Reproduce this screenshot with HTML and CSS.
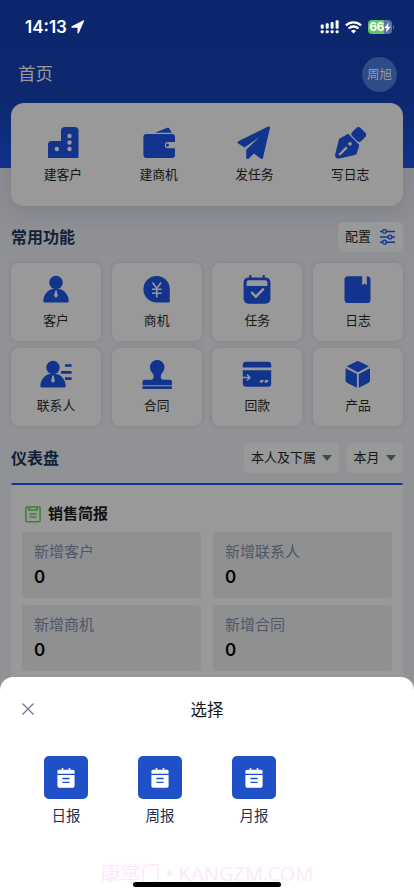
FILE: index.html
```html
<!DOCTYPE html>
<html lang="zh-CN">
<head>
<meta charset="utf-8">
<meta name="viewport" content="width=device-width, initial-scale=1">
<title>首页</title>
<link rel="stylesheet" href="styles.css">
</head>
<body>
<div class="screen">
  <header class="hero">
    <div class="status">
      <div class="clock"><span>14:13</span>
        <svg width="14" height="14" viewBox="0 0 14 14"><path d="M13.3.6 7.800 13c-.3.9-1.300.7-1.300-.3V7.700H1.200C.1 7.700 0 6.600.8 6.200L12.500.3c.7-.3 1.100 0 .8.3Z" fill="#fff"/></svg>
      </div>
      <div class="signals">
        <svg width="20" height="14" viewBox="0 0 20 14" fill="#fff"><rect x=".7" y="4.500" width="3" height="4.300" rx="1"/><rect x="5.700" y="3.300" width="3" height="5.500" rx="1"/><rect x="10.600" y="2" width="3" height="6.800" rx="1"/><rect x="15.600" y=".3" width="3" height="8.500" rx="1"/><rect x=".7" y="10.300" width="3" height="3" rx="1"/><rect x="5.700" y="10.300" width="3" height="3" rx="1"/><rect x="10.600" y="10.300" width="3" height="3" rx="1"/><rect x="15.600" y="10.300" width="3" height="3" rx="1"/></svg>
        <svg class="wifi" width="17" height="13" viewBox="0 0 17 13" fill="none" stroke="#fff" stroke-width="2.300"><path d="M.9 4.400a11 11 0 0 1 15.200 0M3.600 7.500a7 7 0 0 1 9.800 0"/><path d="M8.500 12.500 6 10a3.600 3.600 0 0 1 5 0Z" fill="#fff" stroke="none"/></svg>
        <div class="battery"><span>66</span><svg width="7" height="11" viewBox="0 0 7 11"><path d="M4.700.3.4 6h2.300l-.7 4.600L6.700 4.700H4.100Z" fill="#fff"/></svg></div><i class="nub"></i>
      </div>
    </div>
    <div class="navbar"><h1>首页</h1><div class="avatar">周旭</div></div>
  </header>

  <main class="content">
    <section class="quick">
      <div class="quick-item"><svg width="32" height="32" viewBox="0 0 32 32"><path d="M1 31V17.500a3.500 3.500 0 0 1 3.500-3.500H14V4a4 4 0 0 1 4-4h9.500a4 4 0 0 1 4 4v27Z" fill="currentColor"/><g fill="#999"><circle cx="22.500" cy="9" r="2.200"/><circle cx="22.500" cy="15.500" r="2.200"/><circle cx="22.500" cy="22" r="2.200"/><circle cx="9.800" cy="22" r="2.200"/></g></svg><span>建客户</span></div>
      <div class="quick-item"><svg width="32" height="32" viewBox="0 0 32 32"><g fill="currentColor"><path d="M12 5.800 23.500 1c1.500-.6 2.500-.2 3.200 1.100l2 3.700Z"/><path d="M3.400 6.900H29.500A2.700 2.700 0 0 1 32 9.500v5.400H25a3.200 3.200 0 0 0 0 6.400h7V28a3 3 0 0 1-3 3H3.400A3 3 0 0 1 .4 28V9.900a3 3 0 0 1 3-3Z"/><circle cx="24.400" cy="18.100" r="1.600"/></g></svg><span>建商机</span></div>
      <div class="quick-item"><svg width="34" height="34" viewBox="0 0 34 34"><path d="M31.200.6c1-.5 2 0 1.800 1.200l-7 30c-.3 1.200-1.500 1.600-2.500.8L17 27.500l-5.200 5c-1 1-2.600.5-2.600-1v-7.700L22.500 11 7.500 21.500 1.200 17.500c-1-.7-1-1.700.2-2.200Z" fill="currentColor"/></svg><span>发任务</span></div>
      <div class="quick-item"><svg width="32" height="32" viewBox="0 0 32 32"><g fill="currentColor"><rect x="18.400" y="1.700" width="12.800" height="11.600" rx="3" transform="rotate(45 24.800 7.500)"/><path d="M15 7.500 24.500 17c.8.800.8 1.500.5 2.500l-2.100 6.500c-.3 1-.8 1.500-1.900 1.900L5.200 31.400C2 31.800.7 30.300 1.200 27.300L4.800 13c.3-1.100.8-1.600 1.900-2l6.200-3.500c.8-.5 1.400-.7 2.100 0Z"/></g><path d="m5.200 28 7.600-7.600" stroke="#999" stroke-width="2.300"/><circle cx="16" cy="16.800" r="1.900" fill="#999"/></svg><span>写日志</span></div>
    </section>

    <div class="section-head first"><h2>常用功能</h2>
      <button class="chip config"><span>配置</span><svg width="15" height="16" viewBox="0 0 15 16" fill="none" stroke="#133791" stroke-width="1.400"><path d="M0 2.500h2.500m4 0H15M0 8h8m4 0h3M0 13.200h2.500m4 0H15"/><circle cx="4.500" cy="2.500" r="1.900"/><circle cx="10" cy="8" r="1.900"/><circle cx="4.500" cy="13.200" r="1.900"/></svg></button>
    </div>

    <section class="grid">
      <div class="tile"><svg width="30" height="30" viewBox="0 0 30 30"><g fill="currentColor"><circle cx="15" cy="7.500" r="6.700"/><path d="M2.300 26c0-6.500 5-11.700 10-12h5.400c5 .3 10 5.500 10 12 0 .9-.5 1.500-1.500 1.500H3.800c-1 0-1.500-.6-1.500-1.500Z"/></g><path d="m14.400 15.500h1.200l1.300 5.300-1.900 2.300-1.900-2.300Z" fill="#999"/></svg><span>客户</span></div>
      <div class="tile"><svg width="30" height="30" viewBox="0 0 30 30"><path d="M14.600 1a13.200 13.200 0 0 1 13.200 13.200v12a1.200 1.200 0 0 1-1.200 1.200h-12A13.200 13.200 0 0 1 14.600 1Z" fill="currentColor"/><path d="m10.500 7.500 4.300 6 4.300-6M14.800 13.500v9M10 14.300h9.600M10 18.300h9.600" fill="none" stroke="#999" stroke-width="1.600"/></svg><span>商机</span></div>
      <div class="tile"><svg width="30" height="30" viewBox="0 0 30 30"><rect x="1.600" y="2.400" width="26.800" height="26.400" rx="5" fill="currentColor"/><path d="M8.300 0v4M21.700 0v4" stroke="currentColor" stroke-width="2.200"/><path d="M4.600 11V7.500a2.200 2.200 0 0 1 2.200-2.200h16.400a2.200 2.200 0 0 1 2.200 2.200V11Z" fill="#999"/><path d="m9.300 17 4.500 4.700 8-8" fill="none" stroke="#999" stroke-width="2.400"/></svg><span>任务</span></div>
      <div class="tile"><svg width="30" height="30" viewBox="0 0 30 30"><rect x="1.500" y="1.200" width="26" height="26.800" rx="3.600" fill="currentColor"/><path d="M19.200 1v9.300l2.300-1.700 2.300 1.700V1Z" fill="#999"/></svg><span>日志</span></div>
      <div class="tile"><svg width="34" height="30" viewBox="0 0 34 30"><g fill="currentColor"><circle cx="14" cy="7.500" r="6.700"/><path d="M1.300 26c0-6.500 5-11.700 10-12h5.400c5 .3 10 5.500 10 12 0 .9-.5 1.500-1.500 1.500H2.800c-1 0-1.500-.6-1.500-1.500Z"/></g><path d="m13.400 15.500h1.200l1.300 5.300-1.900 2.300-1.900-2.300Z" fill="#999"/><path d="M26 5.500h6.600M22 12.300h10.600M26 18.700h6.600" stroke="currentColor" stroke-width="2.700"/></svg><span>联系人</span></div>
      <div class="tile"><svg width="30" height="30" viewBox="0 0 30 30"><g fill="currentColor"><path d="M15.200 0a7.400 7.400 0 0 1 5.500 12.200c-1.300 1.500-2 2.800-1.900 4.500.1 2 .9 3 2.500 3h6.600c1.200 0 2 .8 2 2v3.500H.5v-3.500c0-1.200.8-2 2-2h6.600c1.600 0 2.400-1 2.500-3 .1-1.700-.6-3-1.900-4.500A7.400 7.400 0 0 1 15.200 0Z"/><rect x=".5" y="26.300" width="29.400" height="2.700" rx=".5"/></g></svg><span>合同</span></div>
      <div class="tile"><svg width="30" height="30" viewBox="0 0 30 30"><g fill="currentColor"><path d="M.8 7.500V5a3.200 3.200 0 0 1 3.200-3.200h22A3.200 3.200 0 0 1 29.200 5v2.500Z"/><path d="M.8 10.300h28.400V23.500a3.200 3.200 0 0 1-3.200 3.200H4a3.200 3.200 0 0 1-3.200-3.200Z"/></g><path d="M0 17.500h7M5 14.500l3 3-3 3" fill="none" stroke="#999" stroke-width="1.400"/><path d="m18.500 20h3.300l-1 2.500h-3.300Zm4.700 0h3.300l-1 2.500h-3.300Z" fill="#999"/></svg><span>回款</span></div>
      <div class="tile"><svg width="30" height="30" viewBox="0 0 30 30"><g fill="currentColor"><path d="M14 1.200a2 2 0 0 1 1.600 0L26 6.300 14.800 12.200 3.600 6.300Z"/><path d="M2.600 8.200 13.900 13.900V27.800L4 22.700a2.300 2.300 0 0 1-1.400-2.200ZM27 8.200 15.800 13.900V27.800l9.800-5.100a2.300 2.300 0 0 0 1.400-2.200Z"/></g></svg><span>产品</span></div>
    </section>

    <div class="section-head second"><h2>仪表盘</h2>
      <div class="filters"><button class="chip"><span>本人及下属</span><i class="caret"></i></button><button class="chip"><span>本月</span><i class="caret"></i></button></div>
    </div>

    <section class="board">
      <h3><svg width="16" height="17" viewBox="0 0 16 17" fill="none" stroke="#398530" stroke-width="1.500"><rect x=".9" y="1" width="14.200" height="14.800" rx="1"/><path d="M3.800 1v3h8.400V1M4.500 8h7M4.500 11h7"/></svg>销售简报</h3>
      <div class="stats">
        <div class="stat"><span>新增客户</span><b>0</b></div>
        <div class="stat"><span>新增联系人</span><b>0</b></div>
        <div class="stat"><span>新增商机</span><b>0</b></div>
        <div class="stat"><span>新增合同</span><b>0</b></div>
      </div>
    </section>
  </main>

  <section class="sheet">
    <div class="sheet-head">
      <svg width="12" height="12" viewBox="0 0 12 12"><path d="m.5.5 11 11M11.500.5l-11 11" stroke="#6d7893" stroke-width="1.300"/></svg>
      <strong>选择</strong><i></i>
    </div>
    <div class="options">
      <div class="option"><div class="option-icon"><svg width="18" height="20" viewBox="0 0 18 20"><path d="M.4 5.800V3.200a1.500 1.500 0 0 1 1.500-1.500h14.200a1.500 1.500 0 0 1 1.500 1.500v2.600ZM.4 7.100h17.200v11a1.600 1.600 0 0 1-1.600 1.600H2A1.600 1.600 0 0 1 .4 18.100Z" fill="#fff"/><path d="M5.500 0v2M12.500 0v2" stroke="#fff" stroke-width="1.500"/><path d="M5.400 10.500h7.200M5.400 14.300h7.200" stroke="#2050c8" stroke-width="1.300"/></svg></div><span>日报</span></div>
      <div class="option"><div class="option-icon"><svg width="18" height="20" viewBox="0 0 18 20"><path d="M.4 5.800V3.200a1.500 1.500 0 0 1 1.500-1.500h14.200a1.500 1.500 0 0 1 1.500 1.500v2.600ZM.4 7.100h17.200v11a1.600 1.600 0 0 1-1.600 1.600H2A1.600 1.600 0 0 1 .4 18.100Z" fill="#fff"/><path d="M5.500 0v2M12.500 0v2" stroke="#fff" stroke-width="1.500"/><path d="M5.400 10.500h7.200M5.400 14.300h7.200" stroke="#2050c8" stroke-width="1.300"/></svg></div><span>周报</span></div>
      <div class="option"><div class="option-icon"><svg width="18" height="20" viewBox="0 0 18 20"><path d="M.4 5.800V3.200a1.500 1.500 0 0 1 1.500-1.500h14.200a1.500 1.500 0 0 1 1.500 1.500v2.600ZM.4 7.100h17.200v11a1.600 1.600 0 0 1-1.600 1.600H2A1.600 1.600 0 0 1 .4 18.100Z" fill="#fff"/><path d="M5.500 0v2M12.500 0v2" stroke="#fff" stroke-width="1.500"/><path d="M5.400 10.500h7.200M5.400 14.300h7.200" stroke="#2050c8" stroke-width="1.300"/></svg></div><span>月报</span></div>
    </div>
    <div class="watermark">康掌门 • KANGZM.COM</div>
    <div class="home-bar"></div>
  </section>
</div>
</body>
</html>
```

FILE: styles.css
```css
* { box-sizing: border-box; }
body { margin: 0; font-family: Inter, "Noto Sans CJK SC", sans-serif; }
h1, h2, h3 { margin: 0; }
svg { display: block; flex: none; }
button { border: 0; font: inherit; }

.screen { position: relative; width: 414px; height: 896px; overflow: hidden; background: linear-gradient(#8c8d93 168px, #929396 300px, #8f9093); }

.hero { height: 168px; color: #999; background: linear-gradient(#0c266d, #0d286f 95px, #12348d 168px); }
.status { display: flex; justify-content: space-between; height: 54px; padding: 20px 20px 20px 25px; color: #fff; }
.clock { display: flex; align-items: center; gap: 4px; font-size: 17px; font-weight: 600; line-height: 14px; }
.signals { display: flex; align-items: center; height: 14px; }
.wifi { margin: 0 6px 0 5px; }
.battery { display: flex; align-items: center; justify-content: center; width: 24px; height: 14px; border-radius: 4px; background: linear-gradient(90deg, #62c466 66%, #5c70a4 66%); font-size: 12px; font-weight: 700; line-height: 14px; letter-spacing: -.5px; }
.nub { width: 1px; height: 4px; margin-left: 1px; border-radius: 1px; background: #5c70a4; }
.navbar { display: flex; align-items: center; justify-content: space-between; height: 40px; padding: 0 17px 0 18px; }
.navbar h1 { padding-bottom: 1px; font-size: 17.500px; font-weight: 400; line-height: 24px; }
.avatar { width: 35px; height: 35px; border-radius: 50%; background: #2d4c88; font-size: 12.500px; line-height: 35px; text-align: center; }

.content { margin-top: -65px; padding: 0 11px; }
.quick { display: grid; grid-template-columns: repeat(4, 1fr); height: 103px; padding: 23px 5px 0 4px; border-radius: 13px; background: #999; box-shadow: 0 6px 18px rgba(30, 40, 80, .13); }
.quick-item { display: flex; flex-direction: column; align-items: center; color: #12348c; }
.quick-item svg { height: 34px; }
.quick-item span { margin-top: 5px; color: #161616; font-size: 12.800px; line-height: 19px; }

.section-head { display: flex; align-items: center; justify-content: space-between; height: 30px; }
.section-head h2 { color: #121f38; font-size: 16px; font-weight: 600; line-height: 24px; }
.first { margin: 16px 0 11px; }
.second { margin: 17px 0 10px; }
.filters { display: flex; gap: 7px; }
.chip { display: flex; align-items: center; gap: 6px; height: 30px; padding: 0 7.500px 0 7px; border-radius: 6px; background: #989999; color: #151515; font-size: 13px; }
.chip span { padding-bottom: 2px; line-height: 20px; }
.config { gap: 9px; padding: 0 8px 0 7px; }
.caret { border: 5.500px solid transparent; border-top: 6px solid #414859; border-bottom: 0; }

.grid { display: grid; grid-template-columns: repeat(4, 90px); grid-auto-rows: 78px; justify-content: space-between; row-gap: 7px; }
.tile { display: flex; flex-direction: column; align-items: center; padding-top: 12px; border-radius: 8px; background: #999; box-shadow: 0 0 5px rgba(40, 50, 80, .15); color: #12348c; }
.tile span { margin-top: 6px; color: #181818; font-size: 12.800px; line-height: 19px; }

.board { height: 220px; padding: 19px 11px 0; border-top: 2px solid #12348e; border-radius: 2px; background: #999; }
.board h3 { display: flex; align-items: center; gap: 7px; height: 20px; padding-left: 3px; color: #101010; font-size: 15px; font-weight: 600; line-height: 20px; }
.stats { display: grid; grid-template-columns: repeat(2, 179px); grid-auto-rows: 66px; justify-content: space-between; row-gap: 7px; margin-top: 8px; }
.stat { display: flex; flex-direction: column; padding: 9px 12px; border-radius: 3px; background: #8f9092; }
.stat span { color: #505666; font-size: 15px; line-height: 22px; }
.stat b { color: #050505; font-size: 17px; font-weight: 600; line-height: 28px; }

.sheet { position: absolute; inset: 677px 0 0; border-radius: 13px 13px 0 0; background: #fff; }
.sheet-head { display: grid; grid-template-columns: 12px 1fr 12px; align-items: center; height: 64px; padding: 0 22px; color: #171717; text-align: center; }
.sheet-head strong { font-size: 16.500px; font-weight: 400; }
.options { display: grid; grid-template-columns: repeat(3, 94px); padding: 15px 0 0 19px; }
.option { display: flex; flex-direction: column; align-items: center; color: #202f4d; font-size: 14.500px; line-height: 22px; }
.option-icon { display: grid; place-items: center; width: 44px; height: 43px; margin-bottom: 6px; border-radius: 5px; background: #2050c8; }
.watermark { position: absolute; top: 183px; left: 0; width: 100%; color: #fce9fb; font-family: "Noto Sans", "Noto Sans CJK SC", sans-serif; font-size: 20px; line-height: 28px; text-align: center; white-space: nowrap; }
.home-bar { position: absolute; left: 133px; bottom: 9px; width: 148px; height: 5px; border-radius: 3px; background: #000; }
```
